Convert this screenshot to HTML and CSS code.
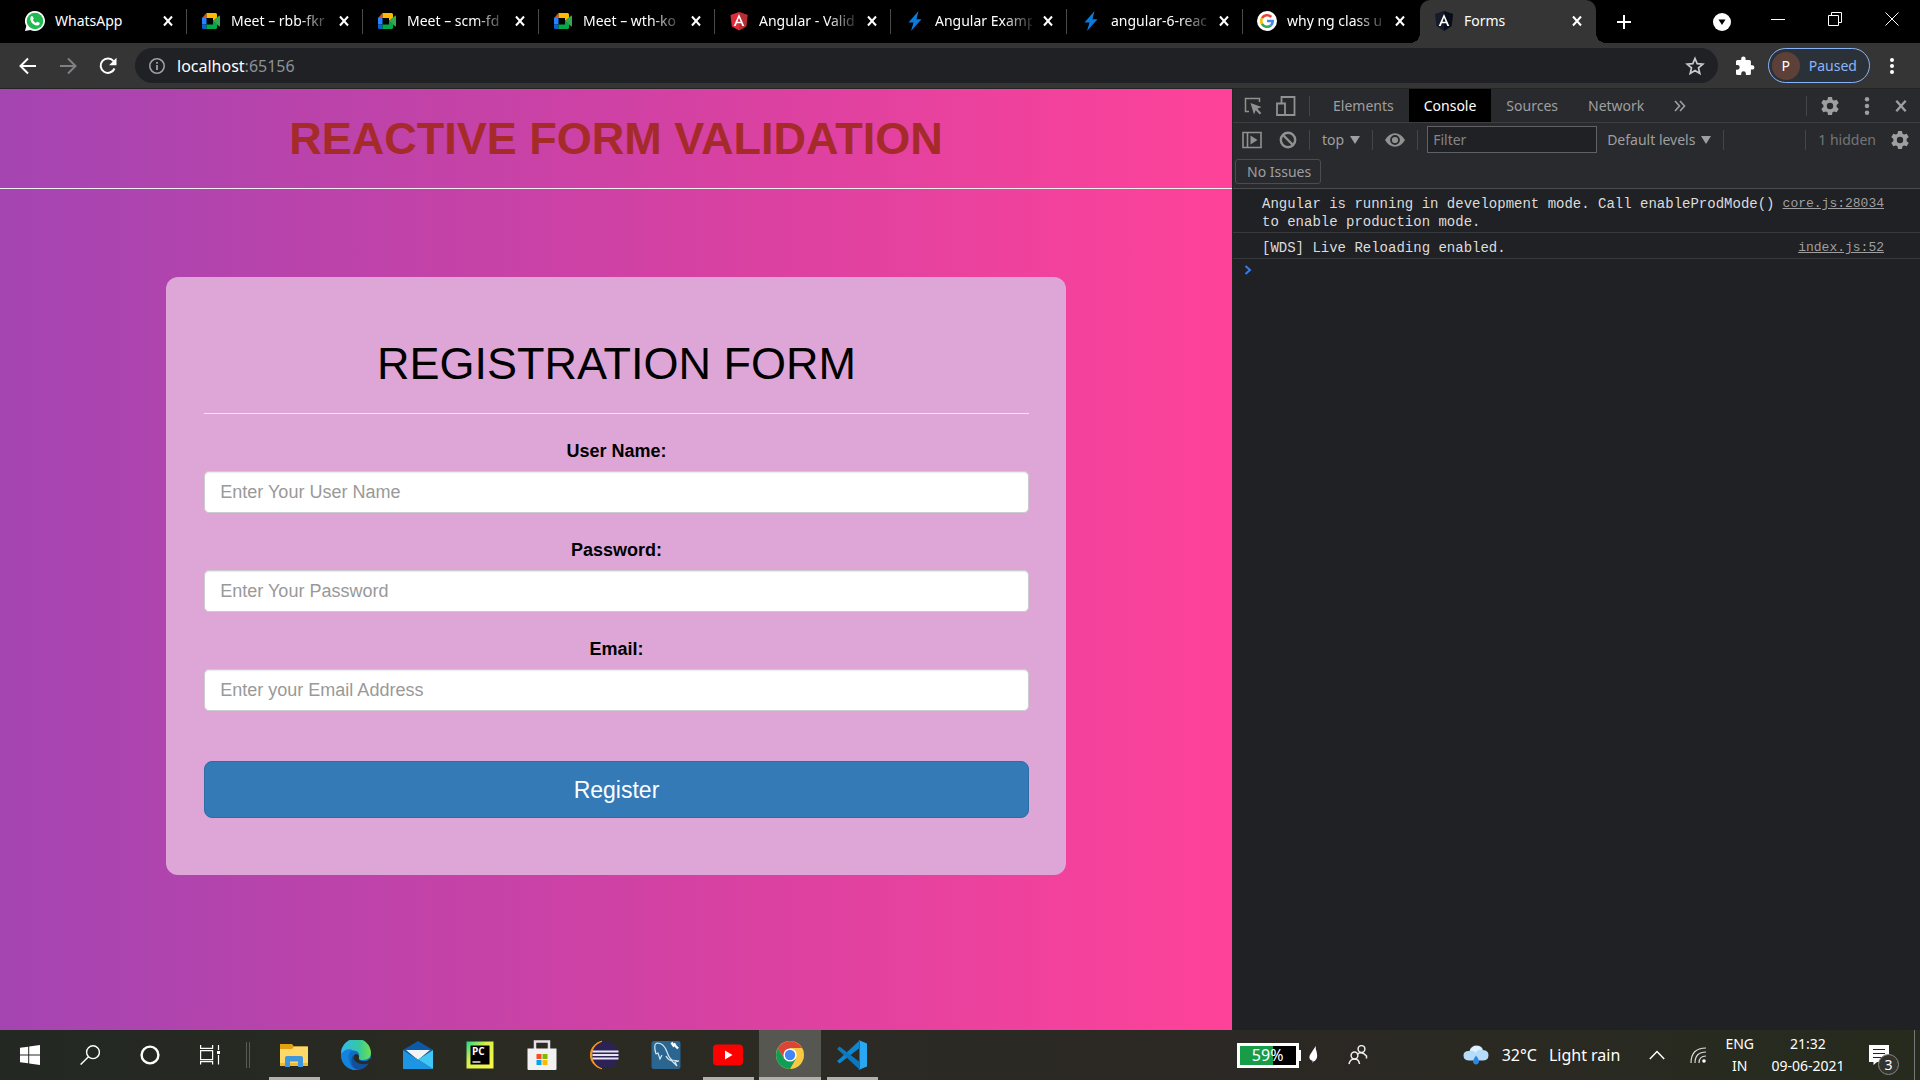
FILE: index.html
```html
<!DOCTYPE html>
<html lang="en">
<head>
<meta charset="utf-8">
<title>Forms</title>
<link rel="stylesheet" href="styles.css">
</head>
<body>
<svg class="defs" aria-hidden="true">
  <symbol id="x" viewBox="0 0 12 12"><path d="M2 1.5l8 9M10 1.5l-8 9" stroke="currentColor" stroke-width="2" fill="none"/></symbol>
  <symbol id="meet" viewBox="0 0 20 20"><path d="M5.500 2v5H1z" fill="#ea4335"/><path d="M1 7h4.500v6.500H1z" fill="#2684fc"/><path d="M1 13.500h4.500V18H2.500Q1 18 1 16.500z" fill="#0066da"/><path d="M5.500 13.500H12V10l4 3.200v3.300Q16 18 14.500 18h-9z" fill="#00ac47"/><path d="M5.500 2h9Q16 2 16 3.500v3.300L12 10V7H5.500z" fill="#ffba00"/><path d="M12 10l6-5.300q1-.7 1 .5v9.600q0 1.200-1 .5z" fill="#34a853"/></symbol>
  <symbol id="bolt" viewBox="0 0 20 20"><path d="M13.500 0L3.500 11.500h5L6 20 16.500 8.200h-5z" fill="#0a7bdc"/></symbol>
  <symbol id="gear" viewBox="0 0 20 20"><path fill="currentColor" fill-rule="evenodd" d="M8 1h4l.5 2.700 1.600.9 2.600-.9 2 3.400-2.100 1.800v2.200l2.100 1.800-2 3.400-2.600-.9-1.600.9L12 19H8l-.5-2.700-1.600-.9-2.600.9-2-3.400 2.100-1.800V8.900L1.300 7.100l2-3.400 2.600.9 1.600-.9zM10 6.800a3.200 3.200 0 1 0 0 6.400 3.200 3.200 0 0 0 0-6.400z"/></symbol>
  <symbol id="dots" viewBox="0 0 6 18"><g fill="currentColor"><circle cx="3" cy="3" r="2"/><circle cx="3" cy="9" r="2"/><circle cx="3" cy="15" r="2"/></g></symbol>
  <symbol id="down" viewBox="0 0 10 10"><path d="M0 1h10L5 9z" fill="currentColor"/></symbol>
</svg>

<header class="tabstrip">
  <div class="tab"><svg class="favicon" viewBox="0 0 20 20"><path d="M10 0a10 10 0 1 1-4.600 18.900L0 20l1.300-5A10 10 0 0 1 10 0z" fill="#fff"/><circle cx="10" cy="10" r="8.300" fill="#1fba50"/><path d="M6 5.500q1-1 1.800 0l.9 2q0 .6-.9 1.400 1 2 3.200 3 1-1.300 1.500-1.100l2 1q.5.400 0 1.500-1 1.500-3 1.200Q6.500 13.500 5.300 8.500 5.200 6.500 6 5.500z" fill="#fff"/></svg><span class="tab-title">WhatsApp</span><button class="tab-close" aria-label="Close tab"><svg><use href="#x"/></svg></button></div>
  <div class="tab"><svg class="favicon"><use href="#meet"/></svg><span class="tab-title faded">Meet – rbb-fkr</span><button class="tab-close" aria-label="Close tab"><svg><use href="#x"/></svg></button></div>
  <div class="tab"><svg class="favicon"><use href="#meet"/></svg><span class="tab-title faded">Meet – scm-fd</span><button class="tab-close" aria-label="Close tab"><svg><use href="#x"/></svg></button></div>
  <div class="tab"><svg class="favicon"><use href="#meet"/></svg><span class="tab-title faded">Meet – wth-ko</span><button class="tab-close" aria-label="Close tab"><svg><use href="#x"/></svg></button></div>
  <div class="tab"><svg class="favicon" viewBox="0 0 20 20"><path d="M10 1l8.500 3-1.300 11.500L10 19.500l-7.200-4L1.500 4z" fill="#dd2c3a"/><path d="M10 1l8.500 3-1.300 11.500L10 19.500z" fill="#b52e31"/><path d="M10 3L4.700 15h2l1.100-2.700h4.400l1.100 2.700h2zm0 3.800l1.600 3.900H8.400z" fill="#fff"/></svg><span class="tab-title faded">Angular - Valid</span><button class="tab-close" aria-label="Close tab"><svg><use href="#x"/></svg></button></div>
  <div class="tab"><svg class="favicon"><use href="#bolt"/></svg><span class="tab-title faded">Angular Examp</span><button class="tab-close" aria-label="Close tab"><svg><use href="#x"/></svg></button></div>
  <div class="tab"><svg class="favicon"><use href="#bolt"/></svg><span class="tab-title faded">angular-6-reac</span><button class="tab-close" aria-label="Close tab"><svg><use href="#x"/></svg></button></div>
  <div class="tab tab-last"><svg class="favicon" viewBox="0 0 20 20"><circle cx="10" cy="10" r="10" fill="#fff"/><g fill="none" stroke-width="2.600"><path d="M14.200 6A5.800 5.800 0 0 0 5 7.200" stroke="#ea4335"/><path d="M5 7.200a5.800 5.800 0 0 0 0 5.600" stroke="#fbbc05"/><path d="M5 12.800a5.800 5.800 0 0 0 8.800 1.600" stroke="#34a853"/><path d="M13.800 14.400A5.600 5.600 0 0 0 15.700 10H10" stroke="#4285f4"/></g></svg><span class="tab-title faded">why ng class u</span><button class="tab-close" aria-label="Close tab"><svg><use href="#x"/></svg></button></div>
  <div class="tab tab-active"><svg class="favicon" viewBox="0 0 20 20"><path d="M10 0l9 3-1.400 12L10 20l-7.600-5L1 3z" fill="#151b2b"/><path d="M10 0l9 3-1.400 12L10 20z" fill="#080d1a"/><path d="M10 3L4.700 15h2l1.100-2.700h4.400l1.100 2.700h2zm0 3.800l1.600 3.900H8.400z" fill="#fff"/></svg><span class="tab-title">Forms</span><button class="tab-close" aria-label="Close tab"><svg><use href="#x"/></svg></button></div>
  <button class="new-tab" aria-label="New tab"><svg viewBox="0 0 16 16"><path d="M8 1v14M1 8h14" stroke="#fff" stroke-width="2"/></svg></button>
  <button class="tab-search" aria-label="Search tabs"><svg viewBox="0 0 18 18"><circle cx="9" cy="9" r="9" fill="#fff"/><path d="M5.500 6.500h7L9 12z" fill="#000"/></svg></button>
  <div class="window-buttons">
    <button aria-label="Minimize"><svg viewBox="0 0 14 14"><path d="M0 7.500h14" stroke="#fff"/></svg></button>
    <button aria-label="Restore"><svg viewBox="0 0 14 14" fill="none" stroke="#fff"><path d="M.5 3.500h10v10H.5zM3.500 3.500v-3h10v10h-3"/></svg></button>
    <button aria-label="Close"><svg viewBox="0 0 14 14"><path d="M.5.5l13 13M13.500.5l-13 13" stroke="#fff"/></svg></button>
  </div>
</header>

<nav class="toolbar">
  <button class="nav-button" aria-label="Back"><svg viewBox="0 0 18 18"><path d="M17 9H2M9 1.500L1.500 9 9 16.500" stroke="#fff" stroke-width="2" fill="none"/></svg></button>
  <button class="nav-button" aria-label="Forward"><svg viewBox="0 0 18 18"><path d="M1 9h15M9 1.500L16.500 9 9 16.500" stroke="#808184" stroke-width="2" fill="none"/></svg></button>
  <button class="nav-button" aria-label="Reload"><svg viewBox="0 0 18 18"><path d="M15.500 11.500A7.200 7.200 0 1 1 14.500 4.200" stroke="#fff" stroke-width="2" fill="none"/><path d="M17.500.8v7.400h-7.400z" fill="#fff"/></svg></button>
  <div class="omnibox">
    <svg class="info" viewBox="0 0 18 18"><circle cx="9" cy="9" r="7.200" fill="none" stroke="#9aa0a6" stroke-width="1.600"/><path d="M9 8v5M9 5v1.800" stroke="#9aa0a6" stroke-width="1.800"/></svg>
    <span class="url">localhost<span class="port">:65156</span></span>
    <button aria-label="Bookmark this page"><svg viewBox="0 0 20 20"><path d="M10 2.500l2.200 5.200 5.600.5-4.300 3.700 1.300 5.600-4.800-3-4.800 3 1.300-5.600-4.300-3.700 5.600-.5z" fill="none" stroke="#c8cacc" stroke-width="1.700"/></svg></button>
  </div>
  <button class="extensions" aria-label="Extensions"><svg viewBox="0 0 20 20"><path d="M17.200 9.200h-1.300V5.400q0-1.500-1.500-1.500h-3.800V2.600a2.200 2.200 0 0 0-4.400 0v1.300H2.500Q1 3.900 1 5.400v3.500h1.300a2.400 2.400 0 0 1 0 4.800H1v3.800Q1 19 2.500 19h3.700v-1.300a2.300 2.300 0 0 1 4.700 0V19h3.500q1.500 0 1.500-1.500v-3.900h1.300a2.200 2.200 0 0 0 0-4.400z" fill="#fff"/></svg></button>
  <button class="profile"><span class="avatar">P</span>Paused</button>
  <button class="browser-menu" aria-label="Menu"><svg><use href="#dots"/></svg></button>
</nav>

<main class="content">
  <section class="page">
    <h1>REACTIVE FORM VALIDATION</h1>
    <form class="card">
      <h2>REGISTRATION FORM</h2>
      <label for="user">User Name:</label>
      <input id="user" type="text" placeholder="Enter Your User Name">
      <label for="password">Password:</label>
      <input id="password" type="password" placeholder="Enter Your Password">
      <label for="email">Email:</label>
      <input id="email" type="email" placeholder="Enter your Email Address">
      <button type="button">Register</button>
    </form>
  </section>

  <aside class="devtools">
    <div class="dt-row dt-tabs">
      <button aria-label="Inspect"><svg class="i20" viewBox="0 0 20 20"><path d="M6 15.500H2.500v-13h14V6" fill="none" stroke="#919191" stroke-width="1.500"/><path d="M7.500 7l11 4-4.200 1.800 4 4.200-1.600 1.500-4-4.200L11 18.500z" fill="#919191"/></svg></button>
      <button aria-label="Toggle device toolbar"><svg class="i20" viewBox="0 0 20 20"><path d="M5.500 7V1h13v18H9M1 7.500h8V19H1z" fill="none" stroke="#919191" stroke-width="1.800"/></svg></button>
      <i class="sep"></i>
      <div class="panel-tabs">
        <button>Elements</button><button class="selected">Console</button><button>Sources</button><button>Network</button><button aria-label="More tabs"><svg class="i12" viewBox="0 0 12 12"><path d="M1 1l4.500 5L1 11M6 1l4.500 5L6 11" fill="none" stroke="#a0a0a0" stroke-width="1.600"/></svg></button>
      </div>
      <i class="sep push"></i>
      <div class="dt-actions">
        <button aria-label="Settings"><svg class="i20"><use href="#gear"/></svg></button>
        <button aria-label="More options"><svg class="i20"><use href="#dots"/></svg></button>
        <button aria-label="Close DevTools"><svg class="i14"><use href="#x"/></svg></button>
      </div>
    </div>
    <div class="dt-row dt-filter">
      <button aria-label="Show console sidebar"><svg class="i20" viewBox="0 0 20 20"><path d="M1 2.500h18v15H1zM5.500 2.500v15" fill="none" stroke="#919191" stroke-width="1.600"/><path d="M8.500 5.500l7 4.500-7 4.500z" fill="#919191"/></svg></button>
      <button class="clear" aria-label="Clear console"><svg class="i18" viewBox="0 0 18 18"><g fill="none" stroke="#919191" stroke-width="2.400"><circle cx="9" cy="9" r="7.200"/><path d="M4 4l10 10"/></g></svg></button>
      <i class="sep"></i>
      <button class="menu-button">top <svg><use href="#down"/></svg></button>
      <i class="sep"></i>
      <button aria-label="Live expression"><svg class="i20" viewBox="0 0 20 20"><path d="M0 10Q4 3.200 10 3.200T20 10q-4 6.800-10 6.800T0 10z" fill="#919191"/><circle cx="10" cy="10" r="4" fill="none" stroke="#292a2d" stroke-width="1.800"/></svg></button>
      <i class="sep"></i>
      <input type="text" placeholder="Filter" aria-label="Filter">
      <button class="menu-button">Default levels <svg><use href="#down"/></svg></button>
      <i class="sep"></i>
      <i class="sep push"></i>
      <span class="hidden-count">1 hidden</span>
      <button aria-label="Console settings"><svg class="i20"><use href="#gear"/></svg></button>
    </div>
    <div class="issues"><button>No Issues</button></div>
    <div class="log"><p>Angular is running in development mode. Call enableProdMode()<br>to enable production mode.</p><a href="#core">core.js:28034</a></div>
    <div class="log"><p>[WDS] Live Reloading enabled.</p><a href="#index">index.js:52</a></div>
    <div class="prompt"><svg viewBox="0 0 8 10"><path d="M1.500 1L6 5 1.500 9" fill="none" stroke="#367cf1" stroke-width="2"/></svg></div>
  </aside>
</main>

<footer class="taskbar">
  <div class="system">
    <button aria-label="Start"><svg class="i20" viewBox="0 0 20 20"><path d="M0 2.800L8.200 1.700V9.500H0zM9.200 1.500L20 0v9.500H9.200zM0 10.500h8.200v7.800L0 17.200zM9.200 10.500H20V20L9.200 18.500z" fill="#fff"/></svg></button>
    <button aria-label="Search"><svg class="i20" viewBox="0 0 20 20"><g fill="none" stroke="#fff" stroke-width="1.400"><circle cx="13" cy="7.200" r="6.400"/><path d="M8.500 11.800L.6 19.600"/></g></svg></button>
    <button aria-label="Cortana"><svg class="i20" viewBox="0 0 20 20"><circle cx="10" cy="10" r="8.400" fill="none" stroke="#fff" stroke-width="2.400"/></svg></button>
    <button aria-label="Task view"><svg class="i20" viewBox="0 0 20 20"><g fill="none" stroke="#fff" stroke-width="1.200"><path d="M.6 0v3.400h12V0M.6 5.600h12v9H.6zM.6 19.500v-2.900h12v2.900M18.500 0v5M18.500 10v9.500"/></g><path d="M17 6h3v3h-3z" fill="#fff"/></svg></button>
  </div>
  <i class="grip"></i>
  <div class="apps">
    <button class="open" aria-label="File Explorer"><svg viewBox="0 0 30 30"><path d="M1 4h12l2 2.500h13q1 0 1 1V26H1z" fill="#e0a012"/><path d="M1 9h12l2-2.500h14V25q0 1-1 1H2q-1 0-1-1z" fill="#ffd867"/><path d="M1 23h28v2q0 1-1 1H2q-1 0-1-1z" fill="#f5b82e"/><path d="M6 27V18q0-2 2-2h14q2 0 2 2v9h-5v-5.500h-8V27z" fill="#3f96dc"/></svg></button>
    <button aria-label="Microsoft Edge"><svg viewBox="0 0 30 30"><defs><linearGradient id="eg"><stop stop-color="#36b8f0"/><stop offset=".6" stop-color="#35c8a0"/><stop offset="1" stop-color="#6fe04a"/></linearGradient></defs><circle cx="15" cy="15" r="15" fill="#0c6fc8"/><path d="M0 14A15 15 0 0 1 30 13q0 7-8 7-5 0-4-3 1-6-5-6.500Q4 9 0 14z" fill="url(#eg)"/><path d="M0 14q4-6 11-4.500Q5 16 9.500 25q3 5 8 4.800A15 15 0 0 1 0 14z" fill="#1583dc"/><path d="M12 14q-2 11 15.500 9.500-4 6-10 6.300Q7 27 12 14z" fill="#134f9f"/><path d="M18 17.500q-1 3.500 5 3.800 4 0 6-2.500l1.500 3-3 1.700Q16 26 12.500 19q-.5-5 3-5 3 .5 2.500 3.500z" fill="#292b22"/></svg></button>
    <button aria-label="Mail"><svg viewBox="0 0 30 30"><path d="M0 10L15 1l15 9-15 9z" fill="#0c59a8"/><path d="M3 10h24L15 20z" fill="#f4f4f4"/><path d="M0 10l15 9.500L30 29H0z" fill="#1d94e4"/><path d="M30 10L15 19.500 30 29z" fill="#3fc8f5"/></svg></button>
    <button aria-label="PyCharm"><svg viewBox="0 0 30 30"><defs><linearGradient id="pg" x2="1" y2="1"><stop stop-color="#21d789"/><stop offset=".4" stop-color="#d8f04a"/><stop offset="1" stop-color="#fcf84a"/></linearGradient></defs><path d="M1.500 1.500h27v27h-27z" fill="url(#pg)"/><path d="M5.500 5.500h19v19h-19z" fill="#000"/><path d="M7.500 21h8v2h-8z" fill="#aaa"/><text class="pc" x="7" y="15">PC</text></svg></button>
    <button aria-label="Microsoft Store"><svg viewBox="0 0 30 30"><path d="M8 9V1.500h14V9" fill="none" stroke="#e8e0e8" stroke-width="2.500"/><path d="M.5 8.500h29V29q0 1-1 1h-27q-1 0-1-1z" fill="#f2f2f2"/><path d="M9.500 14h5v5h-5z" fill="#f25022"/><path d="M15.500 14h5v5h-5z" fill="#7fba00"/><path d="M9.500 20h5v5h-5z" fill="#00a4ef"/><path d="M15.500 20h5v5h-5z" fill="#ffb900"/></svg></button>
    <button aria-label="Eclipse"><svg viewBox="0 0 30 30"><path d="M13 1.200a14 14 0 0 0 0 27.600A15 15 0 0 1 13 1.200z" fill="#f7941e" stroke="#f7941e"/><circle cx="16.500" cy="15" r="13.300" fill="#2c2255"/><path d="M3.500 11.500h26M3.500 15h26M3.500 18.500h26" stroke="#e8e4f2" stroke-width="2"/></svg></button>
    <button aria-label="MySQL Workbench"><svg viewBox="0 0 30 30"><rect x=".5" y="1" width="29" height="28" rx="2.500" fill="#2b6690"/><path d="M5 14Q2 4 6 3q7 0 10 9 2 6 5 8l7 1-4 1 2 4-5-5q-4-1-6-5M5 14l2-1 2 6 2-4" fill="none" stroke="#d5e6f0" stroke-width="1.200"/><path d="M20.500 2.500l2 3 2-2M23 4.500l4 4" stroke="#fff" stroke-width="2.400" fill="none"/></svg></button>
    <button class="open" aria-label="YouTube"><svg viewBox="0 0 30 30"><rect y="4.500" width="30" height="21" rx="4" fill="#f00"/><path d="M12 10.500v9l7.500-4.500z" fill="#fff"/></svg></button>
    <button class="open current" aria-label="Google Chrome"><svg viewBox="0 0 30 30"><circle cx="15" cy="15" r="14" fill="#fbc940"/><path d="M2.900 8A14 14 0 0 1 27.100 8H15L9 18.500z" fill="#db4437"/><path d="M2.900 8A14 14 0 0 0 15 29l6-10.500L9 18.500z" fill="#0f9d58"/><circle cx="15" cy="15" r="6.600" fill="#fff"/><circle cx="15" cy="15" r="5.200" fill="#4285f4"/></svg></button>
    <button class="open" aria-label="Visual Studio Code"><svg viewBox="0 0 30 30"><path d="M22 1L3 18.500 0 21l2.500 2.500L22 8.500z" fill="#0f86d0"/><path d="M22 29L3 11.500 0 9l2.500-2.500L22 21.500z" fill="#0b78c0"/><path d="M21.500 0L30 3.500v23L21.500 30q1-1 1-2V2q0-1-1-2z" fill="#29a7f2"/></svg></button>
  </div>
  <div class="tray">
    <div class="battery"><span>59%</span></div>
    <svg class="leaf" viewBox="0 0 10 20"><path d="M7.500 0v3q2.500 7 1 11-1.500 3-3.500 3l-1 2v-2.500Q-1 15 1 10z" fill="#fff"/></svg>
    <svg class="people" viewBox="0 0 20 20"><g fill="none" stroke="#eee" stroke-width="1.500"><circle cx="13.500" cy="4" r="3.400"/><path d="M9 9.500q4.500-4 9.500 1.500v2.500"/><circle cx="6.500" cy="10.500" r="3.400"/><path d="M1 19q1-5 5.500-5t5 5"/></g></svg>
    <svg class="weather" viewBox="0 0 26 20"><path d="M6.500 15.500Q.5 15.500.5 10.500T6.500 6Q8 .5 13.500.5T20 5q5.500.5 5.500 5.200 0 5.300-6 5.300z" fill="#b5dcf8"/><path d="M7 6Q9 1 13.500 1t5.500 4q-5-1-6 3-2-3-6-2z" fill="#e2f2fe"/><path d="M13 10.500q3.500 4.500 3 6.500-.8 2.500-3 2.500T10 17q-.3-2 3-6.500z" fill="#2f86e0"/></svg>
    <span class="forecast"><span>32°C</span><span>Light rain</span></span>
    <svg class="chevron" viewBox="0 0 16 10"><path d="M.8 9L8 1.500 15.200 9" fill="none" stroke="#fff" stroke-width="1.500"/></svg>
    <svg class="wifi" viewBox="0 0 16 16"><g fill="none" stroke="#ddd" stroke-width="1.200"><path d="M1 16Q1 1 16 1M5 16Q5 5 16 5M9 16Q9 9 16 9"/></g><circle cx="14" cy="14" r="1.800" fill="#fff"/></svg>
    <span class="two-lines lang">ENG<br>IN</span>
    <span class="two-lines clock">21:32<br>09-06-2021</span>
    <button class="notifications" aria-label="Notifications"><svg viewBox="0 0 20 20"><path d="M0 0h20v17H8l-3.500 3v-3H0z" fill="#fff"/><path d="M4 4.500h12M4 8.500h12M4 12.500h12" stroke="#222"/></svg><span class="badge">3</span></button>
    <i class="show-desktop"></i>
  </div>
</footer>
</body>
</html>
```
FILE: styles.css
```css
* { box-sizing: border-box; }

body {
  margin: 0;
  min-height: 100vh;
  display: grid;
  grid-template-rows: auto auto 1fr auto;
  background: #202124;
  color: #fff;
  font: 14px/20px "Noto Sans", "Open Sans", sans-serif;
}

button {
  border: 0;
  padding: 0;
  margin: 0;
  background: none;
  color: inherit;
  font: inherit;
}

svg { display: block; flex: none; }
.defs { position: absolute; width: 0; height: 0; }
.i20 { width: 20px; height: 20px; }
.i18 { width: 18px; height: 18px; }
.i14 { width: 14px; height: 14px; }
.i12 { width: 12px; height: 12px; }

/* Tab strip */
.tabstrip {
  display: flex;
  height: 43px;
  padding-left: 11px;
  background: #000;
}
.tab {
  display: flex;
  align-items: center;
  gap: 10px;
  flex: 0 1 176px;
  min-width: 0;
  padding: 0 13px 2px 14px;
  background: linear-gradient(#4a4a4a, #4a4a4a) right center / 1px 25px no-repeat;
}
.tab-last { background: none; }
.favicon { width: 20px; height: 20px; }
.tab-title {
  flex: 1;
  min-width: 0;
  white-space: nowrap;
}
.faded {
  -webkit-mask-image: linear-gradient(to right, #000 70%, rgba(0, 0, 0, .15));
  mask-image: linear-gradient(to right, #000 70%, rgba(0, 0, 0, .15));
}
.tab-close svg { width: 12px; height: 12px; }
.tab-active {
  position: relative;
  margin-left: 1px;
  border-radius: 10px 10px 0 0;
  background: #353535;
}
.tab-active::before,
.tab-active::after {
  content: "";
  position: absolute;
  bottom: 0;
  width: 10px;
  height: 10px;
}
.tab-active::before { right: 100%; background: radial-gradient(circle at 0 0, transparent 10px, #353535 10px); }
.tab-active::after { left: 100%; background: radial-gradient(circle at 100% 0, transparent 10px, #353535 10px); }
.new-tab { padding: 0 20px; }
.new-tab svg { width: 16px; height: 16px; }
.tab-search { margin-left: auto; padding: 0 18px 0 16px; }
.tab-search svg { width: 18px; height: 18px; }
.window-buttons { display: flex; padding-bottom: 6px; }
.window-buttons button { width: 57px; display: grid; place-items: center; }
.window-buttons svg { width: 14px; height: 14px; }

/* Browser toolbar */
.toolbar {
  display: flex;
  align-items: center;
  height: 46px;
  padding: 0 24px 0 8px;
  background: #353535;
  border-bottom: 1px solid #242424;
}
.nav-button { width: 40px; display: grid; place-items: center; }
.nav-button svg { width: 18px; height: 18px; }
.omnibox {
  display: flex;
  align-items: center;
  flex: 1;
  height: 35px;
  margin-left: 7px;
  padding: 0 13px;
  border-radius: 18px;
  background: #202124;
  font-size: 16px;
}
.info { width: 18px; height: 18px; }
.url { flex: 1; margin-left: 11px; }
.port { color: #8d9196; }
.omnibox button svg { width: 20px; height: 20px; }
.extensions { padding: 0 13px 0 17px; }
.extensions svg { width: 20px; height: 20px; }
.profile {
  display: flex;
  align-items: center;
  gap: 9px;
  height: 35px;
  padding: 0 12px 0 3px;
  border: 1px solid #8ab4f8;
  border-radius: 18px;
  background: #2b3138;
  color: #8ab4f8;
}
.avatar {
  width: 28px;
  height: 28px;
  border-radius: 50%;
  background: #5d4037;
  color: #fff;
  line-height: 28px;
  text-align: center;
}
.browser-menu { margin-left: 18px; }
.browser-menu svg { width: 8px; height: 18px; }

/* Split view */
.content {
  display: grid;
  grid-template-columns: minmax(0, 1232fr) minmax(0, 688fr);
}

/* Web page */
.page {
  background: linear-gradient(to right, #a445b2, #d441a3 55%, #ff4299);
  font-family: "Liberation Sans", Arial, sans-serif;
  text-align: center;
}
h1, h2 {
  margin: 0;
  font-size: 45px;
  line-height: 50px;
}
h1 {
  padding: 25px 0 24px;
  border-bottom: 1px solid #eee;
  color: #a52a2a;
}
h2 {
  margin-bottom: 25px;
  padding-bottom: 24px;
  border-bottom: 1px solid #f4e4f2;
  font-weight: 400;
}
.card {
  display: flex;
  flex-direction: column;
  width: 73%;
  max-width: 900px;
  margin: 88px auto;
  padding: 62px 37px 57px 38px;
  border-radius: 12px;
  background: #dea6d7;
  color: #000;
}
.card label {
  margin-bottom: 7px;
  font-size: 18px;
  line-height: 25px;
  font-weight: 700;
}
.card input {
  width: 100%;
  height: 42px;
  margin-bottom: 25px;
  padding: 0 15px;
  border: 1px solid #ccc;
  border-radius: 5px;
  background: #fff;
  box-shadow: inset 0 1px 1px rgba(0, 0, 0, .08);
  font: 18px/24px "Liberation Sans", Arial, sans-serif;
}
.card input::placeholder { color: #999; }
.card button {
  height: 57px;
  margin-top: 25px;
  border: 1px solid #2e6da4;
  border-radius: 8px;
  background: #337ab7;
  color: #fff;
  font-size: 23px;
}

/* DevTools */
.devtools { border-left: 1px solid #242424; color: #9f9fa0; }
.dt-row {
  display: flex;
  align-items: center;
  height: 34px;
  padding: 0 12px 0 10px;
  background: #292a2d;
}
.dt-tabs { gap: 13px; border-bottom: 1px solid #3d3d3d; }
.sep { width: 1px; height: 20px; background: #454545; }
.push { margin-left: auto; }
.panel-tabs { display: flex; align-self: stretch; margin-left: -5px; }
.panel-tabs button { padding: 0 15px; }
.panel-tabs .selected { background: #000; color: #fff; }
.dt-actions { display: flex; align-items: center; gap: 17px; }
.dt-filter { gap: 12px; height: 33px; padding: 0 10px 0 9px; }
.clear { margin-left: 5px; }
.menu-button { display: flex; align-items: center; gap: 6px; }
.menu-button svg { width: 10px; height: 10px; }
.dt-filter input {
  width: 170px;
  height: 27px;
  margin: 0 -2px 0 -3px;
  padding: 0 5px;
  border: 1px solid #606164;
  background: #202124;
  color: #ddd;
  font: inherit;
}
.dt-filter input::placeholder { color: #85868a; }
.hidden-count { margin-right: 2px; color: #747577; }
.issues { padding: 3px 2px 4px; background: #292a2d; border-bottom: 1px solid #4a4c50; }
.issues button {
  height: 25px;
  padding: 0 9px 0 11px;
  border: 1px solid #4a4c50;
  border-radius: 3px;
}
.log {
  display: flex;
  justify-content: space-between;
  padding: 6px 36px 1px 29px;
  border-bottom: 1px solid #38393c;
  color: #dcdcdc;
  font: 14px/18px "Liberation Mono", Consolas, monospace;
  white-space: nowrap;
}
.log p { margin: 0; }
.log a { color: #9f9fa0; font-size: 13px; }
.prompt { padding: 6px 11px; }
.prompt svg { width: 8px; height: 10px; }

/* Taskbar */
.taskbar {
  display: flex;
  height: 50px;
  background: linear-gradient(to right, #232822, #2b2b22 30%, #2c2825 65%, #262b1d);
}
.system { display: flex; }
.system button { width: 60px; display: grid; place-items: center; }
.grip { width: 4px; height: 26px; margin: 12px 13px 0 6px; border: solid #5a5b55; border-width: 0 1px; }
.apps { display: flex; }
.apps button { width: 62px; display: grid; place-items: center; }
.apps button svg { width: 30px; height: 30px; }
.open { background: linear-gradient(#b5b0ad, #b5b0ad) center bottom / 51px 3px no-repeat; }
.apps .current { background: linear-gradient(#b5b0ad, #b5b0ad) center bottom / 100% 3px no-repeat #575752; }
.pc { font: 700 10px "Open Sans", sans-serif; fill: #fff; }
.tray { display: flex; align-items: center; margin-left: auto; }
.battery {
  position: relative;
  width: 62px;
  height: 25px;
  border: 3px solid #fff;
  background: linear-gradient(to right, #189c48 59%, #000 59%);
  font-size: 16px;
  line-height: 19px;
  text-align: center;
}
.battery::after {
  content: "";
  position: absolute;
  left: 100%;
  top: 4px;
  width: 5px;
  height: 11px;
  background: #fff;
}
.leaf { width: 9px; height: 20px; margin-left: 10px; }
.people { width: 20px; height: 20px; margin-left: 30px; }
.weather { width: 26px; height: 20px; margin-left: 95px; }
.forecast { display: flex; gap: 12px; margin: 0 29px 0 13px; font-size: 16px; }
.chevron { width: 16px; height: 10px; }
.wifi { width: 16px; height: 16px; margin-left: 25px; }
.two-lines { line-height: 22px; text-align: center; }
.lang { margin-left: 19px; }
.clock { width: 76px; margin-left: 16px; }
.notifications { position: relative; margin: 0 25px 0 23px; }
.notifications svg { width: 20px; height: 20px; }
.badge {
  position: absolute;
  left: 9px;
  top: 9px;
  width: 21px;
  height: 21px;
  border: 1px solid #888;
  border-radius: 50%;
  background: #33342d;
  line-height: 19px;
}
.show-desktop { width: 6px; height: 50px; border-left: 1px solid #777; }
```
